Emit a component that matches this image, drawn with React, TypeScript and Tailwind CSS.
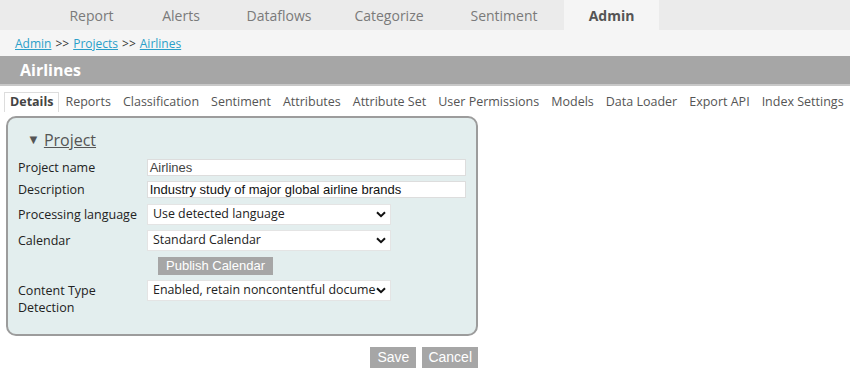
import React from "react";

const nav: [string, string][] = [
  ["Report", "w-[93px]"],
  ["Alerts", "w-[86px]"],
  ["Dataflows", "w-[110px]"],
  ["Categorize", "w-[110px]"],
  ["Sentiment", "w-[120px]"],
];
const tabs = ["Reports", "Classification", "Sentiment", "Attributes", "Attribute Set", "User Permissions", "Models", "Data Loader", "Export API", "Index Settings"];

function Chevron() {
  return (
    <svg width="10" height="7" viewBox="0 0 10 7" className="shrink-0">
      <path d="M1 1.2 L5 5.2 L9 1.2" fill="none" stroke="#111" strokeWidth="2" />
    </svg>
  );
}

function Select({ text }: { text: string }) {
  return (
    <div className="flex items-center h-[21px] w-[244px] bg-white border border-[#e4e4e4] pl-[5px] pr-[4px]">
      <span className="flex-1 overflow-hidden whitespace-nowrap text-[12.4px] text-[#222] font-['Open_Sans',sans-serif]">{text}</span>
      <Chevron />
    </div>
  );
}

function Row({ label, children, mt, h }: { label: React.ReactNode; children: React.ReactNode; mt: string; h: string }) {
  return (
    <div className={`flex items-center ${mt} ${h}`}>
      <div className="w-[129px] leading-[17px]">{label}</div>
      {children}
    </div>
  );
}

export default function App() {
  return (
    <div className="w-[850px] h-[374px] bg-white font-['Open_Sans',sans-serif] overflow-hidden">
      <div className="h-[30px] bg-[#ebebeb] flex items-stretch pl-[45px]">
        {nav.map(([n, w]) => (
          <div key={n} className={`flex items-center justify-center ${w} text-[14px] text-[#7a7a7a]`}>{n}</div>
        ))}
        <div className="w-[95px] bg-[#f5f5f5] flex items-center justify-center text-[14px] font-bold text-[#555]">Admin</div>
      </div>
      <div className="h-[26px] bg-[#f5f5f5] flex items-center px-[15px] pt-[1px] text-[12px] text-[#333] gap-[4px]">
        <span className="text-[#2a9fc9] underline">Admin</span>
        <span>&gt;&gt;</span>
        <span className="text-[#2a9fc9] underline">Projects</span>
        <span>&gt;&gt;</span>
        <span className="text-[#2a9fc9] underline">Airlines</span>
      </div>
      <div className="h-[30px] bg-[#a6a6a6] border-b-2 border-[#c8c8c8] flex items-center px-[20px] text-[16px] font-bold text-white">Airlines</div>
      <div className="flex items-end h-[26px] pl-[4px] text-[12.5px] text-[#555]">
        <div className="border border-b-0 border-[#ddd] px-[5px] h-[20px] flex items-center font-bold text-[#444]">Details</div>
        {tabs.map((t) => (
          <div key={t} className="px-[6px] h-[20px] flex items-center">{t}</div>
        ))}
      </div>
      <div className="ml-[6px] mt-[4px] w-[472px] h-[220px] bg-[#e3eeee] border-2 border-[#9c9c9c] rounded-[10px] pt-[12px] px-[10px] text-[12.5px] text-[#222]">
        <div className="ml-[9px] text-[16px] text-[#555] flex items-center gap-[4px] h-[20px]">
          <span className="text-[13px]">▼</span>
          <span className="underline">Project</span>
        </div>
        <Row label="Project name" mt="mt-[9px]" h="h-[17px]">
          <div className="h-[17px] w-[320px] bg-white border border-[#ddd] flex items-center px-[2px] text-[13px] text-[#444] font-['Liberation_Sans',Arial,sans-serif]">Airlines</div>
        </Row>
        <Row label="Description" mt="mt-[5px]" h="h-[17px]">
          <div className="h-[17px] w-[320px] bg-white border border-[#ddd] flex items-center px-[2px] text-[13px] text-[#111] font-['Liberation_Sans',Arial,sans-serif]">Industry study of major global airline brands</div>
        </Row>
        <Row label="Processing language" mt="mt-[6px]" h="h-[21px]">
          <Select text="Use detected language" />
        </Row>
        <Row label="Calendar" mt="mt-[5px]" h="h-[21px]">
          <Select text="Standard Calendar" />
        </Row>
        <Row label="" mt="mt-[6px]" h="h-[18px]">
          <div className="ml-[11px] flex items-center h-[18px] px-[8px] bg-[#a6a6a6] text-white text-[13px] font-['Liberation_Sans',Arial,sans-serif]">Publish Calendar</div>
        </Row>
        <div className="flex items-start mt-[5px]">
          <div className="w-[129px] leading-[17px] pt-[2px]">Content Type<br />Detection</div>
          <Select text="Enabled, retain noncontentful documents" />
        </div>
      </div>
      <div className="w-[478px] flex justify-end gap-[6px] mt-[11px]">
        <div className="h-[21px] px-[7px] flex items-center bg-[#a6a6a6] text-white text-[14px] font-['Liberation_Sans',Arial,sans-serif]">Save</div>
        <div className="h-[21px] px-[6px] flex items-center bg-[#a6a6a6] text-white text-[14px] font-['Liberation_Sans',Arial,sans-serif]">Cancel</div>
      </div>
    </div>
  );
}
